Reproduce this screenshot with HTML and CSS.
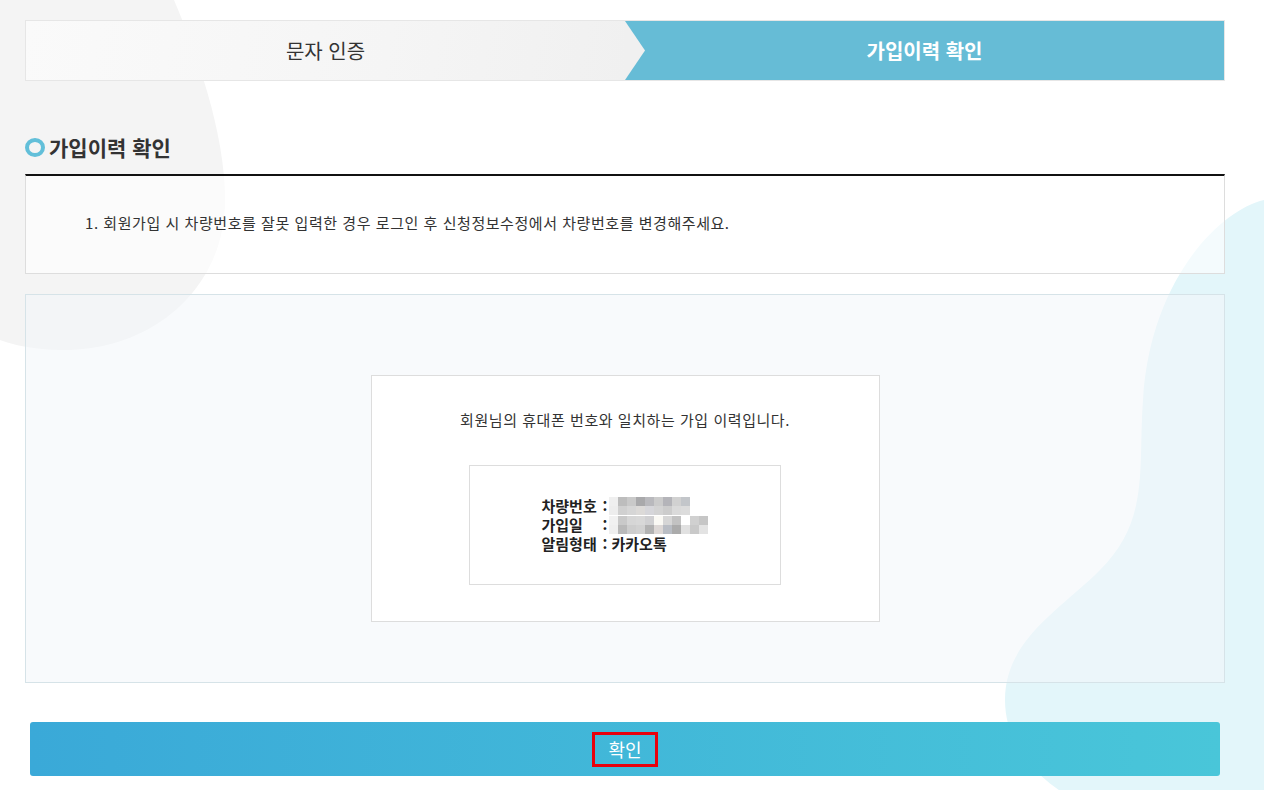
FILE: index.html
```html
<!DOCTYPE html>
<html lang="ko">
<head>
<meta charset="utf-8">
<title>가입이력 확인</title>
<link rel="stylesheet" href="styles.css">
</head>
<body>
<div class="bg">
  <svg width="1264" height="790" viewBox="0 0 1264 790" xmlns="http://www.w3.org/2000/svg">
    <path d="M-20,0 L174,0 C195,50 225,130 225,200 C225,290 150,352 60,350 C20,349 -5,340 -20,330 Z" fill="#f4f4f4"/>
    <path d="M1264,200 C1220,210 1150,280 1143,400 C1138,470 1150,520 1100,570 C1060,610 1005,640 1005,700 C1005,740 1030,775 1075,800 L1264,800 Z" fill="#e3f6fa"/>
  </svg>
</div>
<div class="page">
  <div class="tabs">
    <div class="tab tab-done">문자 인증</div>
    <div class="tab tab-active">가입이력 확인</div>
  </div>

  <h2 class="section-title"><span class="ring"></span>가입이력 확인</h2>

  <div class="notice">
    <p>1. 회원가입 시 차량번호를 잘못 입력한 경우 로그인 후 신청정보수정에서 차량번호를 변경해주세요.</p>
  </div>

  <div class="panel">
    <div class="result-box">
      <p class="result-msg">회원님의 휴대폰 번호와 일치하는 가입 이력입니다.</p>
      <div class="info-box">
        <div class="info-list">
          <div class="info-row">
            <span class="info-label">차량번호</span><span class="info-colon">:</span>
            <svg class="mosaic" width="81" height="18" viewBox="0 0 81 18" xmlns="http://www.w3.org/2000/svg">
              <rect x="0" y="0" width="9" height="9" fill="#efefef"/><rect x="9" y="0" width="9" height="9" fill="#bdbdbd"/><rect x="18" y="0" width="9" height="9" fill="#c9c9c9"/><rect x="27" y="0" width="9" height="9" fill="#a9a9ab"/><rect x="36" y="0" width="9" height="9" fill="#b9b9bd"/><rect x="45" y="0" width="9" height="9" fill="#cbcbcb"/><rect x="54" y="0" width="9" height="9" fill="#b4b4b9"/><rect x="63" y="0" width="9" height="9" fill="#d1d1d1"/><rect x="72" y="0" width="9" height="9" fill="#c3c6ca"/>
              <rect x="0" y="9" width="9" height="9" fill="#ededed"/><rect x="9" y="9" width="9" height="9" fill="#d0d0d0"/><rect x="18" y="9" width="9" height="9" fill="#d6d6d6"/><rect x="27" y="9" width="9" height="9" fill="#dcdad8"/><rect x="36" y="9" width="9" height="9" fill="#d6d6da"/><rect x="45" y="9" width="9" height="9" fill="#d3d3d3"/><rect x="54" y="9" width="9" height="9" fill="#cccccc"/><rect x="63" y="9" width="9" height="9" fill="#dadada"/><rect x="72" y="9" width="9" height="9" fill="#dcdcdc"/>
            </svg>
          </div>
          <div class="info-row">
            <span class="info-label">가입일</span><span class="info-colon">:</span>
            <svg class="mosaic" width="99" height="18" viewBox="0 0 99 18" xmlns="http://www.w3.org/2000/svg">
              <rect x="0" y="0" width="9" height="9" fill="#f1f1f1"/><rect x="9" y="0" width="9" height="9" fill="#c9c9c9"/><rect x="18" y="0" width="9" height="9" fill="#d6d6d6"/><rect x="27" y="0" width="9" height="9" fill="#d8d8d8"/><rect x="36" y="0" width="9" height="9" fill="#d0d0d2"/><rect x="45" y="0" width="9" height="9" fill="#faf9f4"/><rect x="54" y="0" width="9" height="9" fill="#d6d6d6"/><rect x="63" y="0" width="9" height="9" fill="#c2c2c2"/><rect x="72" y="0" width="9" height="9" fill="#ffffff"/><rect x="81" y="0" width="9" height="9" fill="#d0d0d0"/><rect x="90" y="0" width="9" height="9" fill="#c6c6c6"/>
              <rect x="0" y="9" width="9" height="9" fill="#efefef"/><rect x="9" y="9" width="9" height="9" fill="#b9b9b9"/><rect x="18" y="9" width="9" height="9" fill="#cdcdcd"/><rect x="27" y="9" width="9" height="9" fill="#d1d1d1"/><rect x="36" y="9" width="9" height="9" fill="#b2b2b2"/><rect x="45" y="9" width="9" height="9" fill="#ddd8d6"/><rect x="54" y="9" width="9" height="9" fill="#b9bdc4"/><rect x="63" y="9" width="9" height="9" fill="#ababab"/><rect x="72" y="9" width="9" height="9" fill="#e1e1e1"/><rect x="81" y="9" width="9" height="9" fill="#c9c9c9"/><rect x="90" y="9" width="9" height="9" fill="#e3e3e3"/>
            </svg>
          </div>
          <div class="info-row">
            <span class="info-label">알림형태</span><span class="info-colon">:</span>
            <span class="info-text">카카오톡</span>
          </div>
        </div>
      </div>
    </div>
  </div>

  <button class="confirm-btn" type="button"><span class="confirm-label">확인</span></button>
</div>
</body>
</html>
```

FILE: styles.css
```css
html, body {
  margin: 0;
  padding: 0;
}
body {
  width: 1264px;
  height: 790px;
  overflow: hidden;
  position: relative;
  background: #ffffff;
  font-family: "Noto Sans CJK KR", "Noto Sans", sans-serif;
  color: #333333;
}
.bg {
  position: absolute;
  left: 0;
  top: 0;
  z-index: 0;
  line-height: 0;
}
.page {
  position: relative;
  z-index: 1;
  width: 1200px;
  margin-left: 25px;
  padding-top: 20px;
}

/* steps */
.tabs {
  display: flex;
  height: 59px;
  border: 1px solid #e6e6e6;
}
.tab {
  width: 50%;
  display: flex;
  align-items: center;
  justify-content: center;
  font-size: 20px;
  line-height: 26px;
}
.tab-done {
  position: relative;
  z-index: 2;
  background: linear-gradient(100deg, #fafafa 0%, #f5f5f5 60%, #f0f0f0 100%);
  color: #333333;
  font-weight: 400;
}
.tab-done::after {
  content: "";
  position: absolute;
  right: -20px;
  top: 0;
  width: 20px;
  height: 100%;
  background: #f0f0f0;
  clip-path: polygon(0 0, 100% 50%, 0 100%);
}
.tab-active {
  background: #66bcd6;
  color: #ffffff;
  font-weight: 700;
}

/* heading */
.section-title {
  display: flex;
  align-items: center;
  margin: 54px 0 15px 0;
  height: 24px;
  font-size: 21px;
  line-height: 24px;
  font-weight: 700;
  color: #333333;
}
.ring {
  width: 20px;
  height: 19px;
  box-sizing: border-box;
  border: 4.5px solid #62bfd9;
  border-radius: 50%;
  margin-right: 4px;
}

/* notice */
.notice {
  border-top: 2px solid #111111;
  border-left: 1px solid #dddddd;
  border-right: 1px solid #dddddd;
  border-bottom: 1px solid #dddddd;
  background: rgba(255, 255, 255, 0.6);
  padding: 36px 0 39px 59px;
}
.notice p {
  margin: 0;
  font-size: 15px;
  line-height: 22px;
  letter-spacing: 0.55px;
  color: #333333;
}

/* panel */
.panel {
  margin-top: 20px;
  border: 1px solid #d6e3e8;
  background: rgba(243, 246, 250, 0.57);
  padding: 80px 0 60px 0;
  display: flex;
  justify-content: center;
}
.result-box {
  width: 507px;
  background: #ffffff;
  border: 1px solid #dddddd;
  padding: 33px 0 36px 0;
  display: flex;
  flex-direction: column;
  align-items: center;
}
.result-msg {
  margin: 0;
  font-size: 15px;
  line-height: 22px;
  letter-spacing: 0.55px;
  color: #333333;
}
.info-box {
  margin-top: 34px;
  width: 310px;
  border: 1px solid #dddddd;
  padding: 30px 0 31px 0;
  display: flex;
  justify-content: center;
}
.info-list {
  width: 167px;
  margin-left: 0;
}
.info-row {
  display: flex;
  align-items: center;
  height: 19px;
  font-size: 15px;
  font-weight: 700;
  color: #222222;
}
.info-label {
  width: 61px;
  line-height: 19px;
}
.info-colon {
  width: 4px;
  line-height: 19px;
}
.mosaic {
  display: block;
  margin-left: 2px;
}
.info-text {
  margin-left: 5px;
  line-height: 19px;
}

/* button */
.confirm-btn {
  display: flex;
  align-items: center;
  justify-content: center;
  width: 1190px;
  height: 54px;
  margin: 39px 0 0 5px;
  padding: 0;
  border: 0;
  border-radius: 3px;
  background: linear-gradient(90deg, #3aa9d8 0%, #49c6d9 100%);
  font-family: "Noto Sans CJK KR", "Noto Sans", sans-serif;
  cursor: pointer;
}
.confirm-label {
  display: block;
  border: 3px solid #e8000b;
  padding: 0 13px;
  height: 29px;
  line-height: 29px;
  font-size: 18px;
  font-weight: 400;
  color: #ffffff;
}
```
